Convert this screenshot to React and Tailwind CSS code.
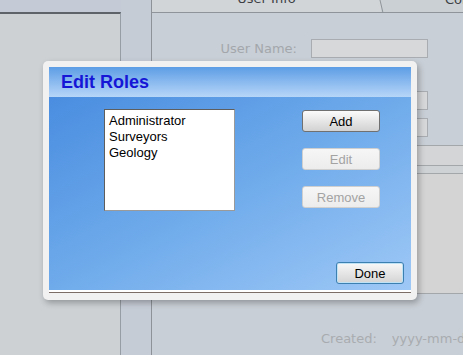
import React from 'react';

const Btn = ({ children, disabled, focus, className = '' }) => {
  const base = 'h-[22px] rounded-[3px] border text-[13px] leading-none flex items-center justify-center';
  const look = disabled
    ? 'border-[#cfcfcf] bg-linear-to-b from-[#f6f6f6] to-[#ececec] text-[#a3a3a3]'
    : focus
    ? 'border-[#3c7fb1] bg-linear-to-b from-[#f8f8f8] to-[#d4d4d4] text-black shadow-[inset_0_0_0_1px_#bfe3f5]'
    : 'border-[#707070] bg-linear-to-b from-[#fbfbfb] to-[#d2d2d2] text-black';
  return <div className={`${base} ${look} ${className}`}>{children}</div>;
};

const App = () => {
  return (
    <div className="relative w-[463px] h-[355px] overflow-hidden flex bg-[#c9cfd6] font-['DejaVu_Sans',sans-serif]">
      {/* left side panel */}
      <div className="w-[121px] shrink-0 flex flex-col">
        <div className="h-[12px] bg-[#c4cbd6]" />
        <div className="flex-1 bg-[#cdd1d4] border-t-2 border-r border-[#5d6368] border-r-[#979da4]" />
      </div>
      {/* splitter strip */}
      <div className="w-[31px] shrink-0 bg-[#c6ccd6] border-r border-[#8c9298]" />

      {/* main panel */}
      <div className="flex-1 min-w-0 flex flex-col">
        <div className="relative h-[13px] border-b border-[#8e9499] flex">
          <div className="w-[229px] shrink-0 bg-[#d2d5d8] overflow-hidden flex justify-center">
            <div className="text-[13px] leading-[13px] mt-[-8px] text-[#3c4044] whitespace-nowrap">User Info</div>
          </div>
          <div className="flex-1 bg-[#cbd0d5] overflow-hidden pl-[64px]">
            <div className="text-[13px] leading-[13px] mt-[-7px] text-[#3c4044] whitespace-nowrap">Contact</div>
          </div>
          <svg className="absolute left-[227px] top-0" width="6" height="13">
            <line x1="1" y1="0" x2="4" y2="13" stroke="#8e9499" strokeWidth="1" />
          </svg>
        </div>

        <div className="flex flex-col pt-[26px]">
          <div className="flex items-center h-[19px]">
            <div className="w-[145px] shrink-0 text-right text-[13px] text-[#a3a7ac] whitespace-nowrap">User Name:</div>
            <div className="ml-[14px] w-[117px] shrink-0 h-[19px] border border-[#a9adb1] bg-[#d6d8da]" />
          </div>
          <div className="ml-[159px] mt-[33px] w-[117px] h-[19px] border border-[#a9adb1] bg-[#d6d8da]" />
          <div className="ml-[159px] mt-[8px] w-[117px] h-[19px] border border-[#a9adb1] bg-[#d6d8da]" />
          <div className="mt-[8px] h-[20px] border-t border-[#a4a7aa] bg-[#d4d5d6]" />
          <div className="h-[8px] border-t border-[#a4a7aa] bg-[#cfd2d5]" />
          <div className="h-[121px] border-t border-b border-[#a4a7aa] bg-[#d4d4d4]" />
          <div className="mt-[35px] pl-[169px] flex text-[13px] text-[#a8acb0] whitespace-nowrap">
            <span>Created:</span>
            <span className="ml-[15px]">yyyy-mm-dd</span>
          </div>
        </div>
      </div>

      {/* modal dialog */}
      <div className="absolute left-[43px] top-[61px] w-[374px] h-[239px] rounded-[5px] bg-[#f1f1f1] px-[6px] pt-[6px] pb-[7px] shadow-[2px_3px_6px_rgba(0,0,0,0.28)] font-['Liberation_Sans',Arial,sans-serif]">
        <div className="flex flex-col h-full">
          <div className="h-[30px] bg-linear-to-b from-[#5c9de5] to-[#b7d6f8] flex items-center pl-[12px]">
            <span className="text-[18px] font-bold text-[#1616d6] leading-none">Edit Roles</span>
          </div>
          <div className="flex-1 flex flex-col bg-linear-to-br from-[#4a8de0] via-[#6fabeb] to-[#9ec8f6]">
            <div className="flex pl-[55px] pt-[12px]">
              <div className="w-[131px] h-[102px] bg-white border border-[#9a9a9a] border-t-[#5e5e5e] border-l-[#5e5e5e] pl-[4px] pt-[3px] text-[13px] leading-[16px] text-black">
                <div>Administrator</div>
                <div>Surveyors</div>
                <div>Geology</div>
              </div>
              <div className="ml-[67px] mt-[1px] flex flex-col gap-[16px]">
                <Btn className="w-[78px]">Add</Btn>
                <Btn className="w-[78px]" disabled>Edit</Btn>
                <Btn className="w-[78px]" disabled>Remove</Btn>
              </div>
            </div>
            <div className="flex-1" />
            <div className="flex justify-end pr-[7px] pb-[6px]">
              <Btn className="w-[68px]" focus>Done</Btn>
            </div>
          </div>
          <div className="h-[2px] bg-white" />
          <div className="h-[1px] bg-[#7c6e66]" />
        </div>
      </div>
    </div>
  );
};

export default App;
